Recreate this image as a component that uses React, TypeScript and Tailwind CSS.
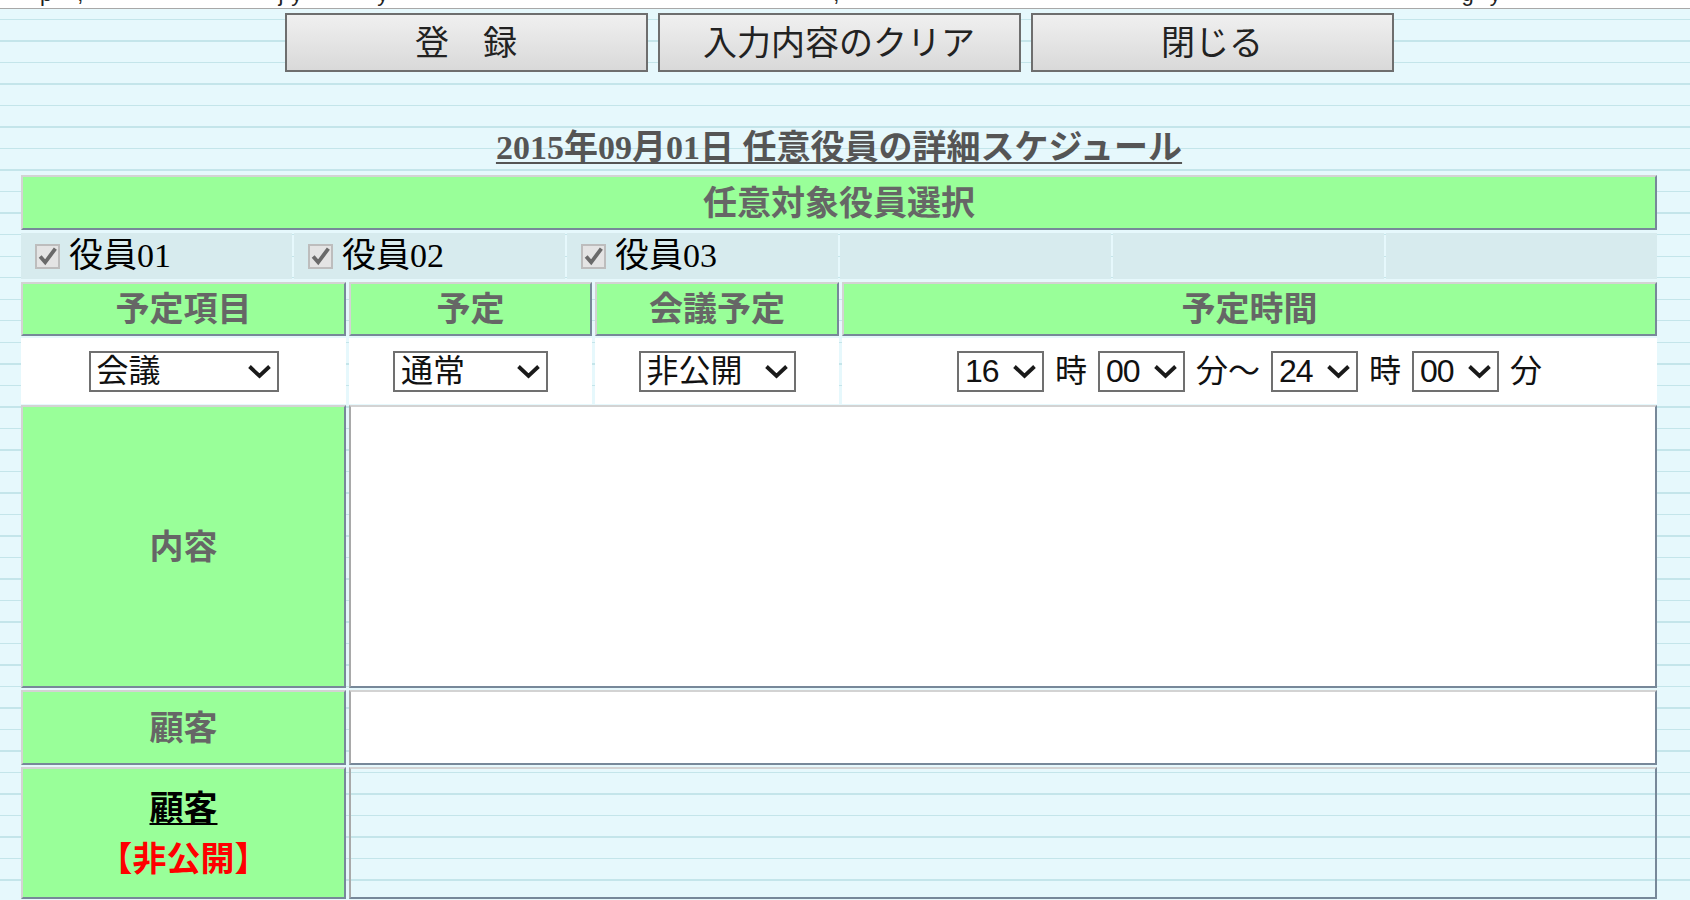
import React from 'react';

const serifJp = "font-['Liberation_Serif','Noto_Sans_CJK_JP',serif]";
const sansJp = "font-['Liberation_Sans','Noto_Sans_CJK_JP',sans-serif]";

const greenCell =
  'flex items-center justify-center bg-[#99ff99] border-2 border-t-[#d3d3d3] border-l-[#d3d3d3] border-r-[#778899] border-b-[#778899]';
const headText = 'text-[34px] font-bold leading-none text-[#666666]';
const whiteBox = 'flex-1 border-2 border-t-[#d3d3d3] border-l-[#a9a9a9] border-r-[#778899] border-b-[#778899]';

function Chevron() {
  return (
    <svg width="25" height="15" viewBox="0 0 25 15" className="shrink-0">
      <polyline points="2.5,2.5 12.5,12 22.5,2.5" fill="none" stroke="#1a1a1a" strokeWidth="3.8" strokeLinejoin="miter" />
    </svg>
  );
}

function Select({ value, className }: { value: string; className: string }) {
  return (
    <div
      className={`flex h-[41px] items-center justify-between border-2 border-[#707070] bg-white pl-[6px] pr-[5px] text-[32px] leading-none text-[#111] ${className}`}
    >
      <span>{value}</span>
      <Chevron />
    </div>
  );
}

function CheckItem({ label }: { label: string }) {
  return (
    <div className="flex items-center gap-[9px] pl-[14px]">
      <div className="flex h-[25px] w-[25px] items-center justify-center border-2 border-[#bdbdbd] bg-[#e4e4e4]">
        <svg viewBox="0 0 20 20" className="h-[21px] w-[21px]">
          <path d="M3 10 L7.8 15.5 L17.5 2.5" fill="none" stroke="#6a6a6a" strokeWidth="3.6" />
        </svg>
      </div>
      <span className={`${serifJp} text-[34px] leading-none text-black`}>{label}</span>
    </div>
  );
}

const buttons = ['登　録', '入力内容のクリア', '閉じる'];
const members = ['役員01', '役員02', '役員03', '', '', ''];

export default function App() {
  return (
    <div className="min-h-screen w-[1690px] bg-[#e6f8fc] bg-[repeating-linear-gradient(180deg,#e6f8fc_0px,#e6f8fc_19px,#c4e5ea_19px,#c4e5ea_20.5px,#e6f8fc_20.5px,#e6f8fc_21.5px)]">
      {/* bottom edge of a text line scrolled off above the form */}
      <div className={`h-[9px] overflow-hidden border-b border-[#a8a8a8] bg-white ${sansJp} text-[22px] leading-none text-[#222]`}>
        <div className="-mt-[17px] flex">
          <span className="ml-[40px]">p</span>
          <span className="ml-[25px]">,</span>
          <span className="ml-[195px]">j</span>
          <span className="ml-[8px]">y</span>
          <span className="ml-[75px]">y</span>
          <span className="ml-[445px]">,</span>
          <span className="ml-[622px]">g</span>
          <span className="ml-[16px]">y</span>
        </div>
      </div>

      <div className="ml-[21px] w-[1636px]">
        <div className="mt-[4px] flex justify-center gap-[10px]">
          {buttons.map((b) => (
            <div
              key={b}
              className={`flex h-[59px] w-[363px] items-center justify-center border-2 border-[#6e6e6e] bg-gradient-to-b from-[#f0f0f0] to-[#d9d9d9] ${sansJp} text-[34px] leading-none text-[#222]`}
            >
              {b}
            </div>
          ))}
        </div>

        <div className="mt-[56px] flex h-[40px] items-center justify-center">
          <span className={`${serifJp} text-[34px] font-bold leading-[40px] text-[#555] underline decoration-2 underline-offset-[3px]`}>
            2015年09月01日 任意役員の詳細スケジュール
          </span>
        </div>

        <div className={`mt-[7px] ${sansJp}`}>
          <div className={`h-[55px] ${greenCell}`}>
            <span className={headText}>任意対象役員選択</span>
          </div>

          <div className="mt-[3px] flex h-[46px] gap-[2px]">
            {members.map((m, i) => (
              <div key={i} className="flex flex-1 items-center bg-[#d7ebee]">
                {m && <CheckItem label={m} />}
              </div>
            ))}
          </div>

          <div className="mt-[3px] flex h-[54px] gap-[3px]">
            <div className={`w-[325px] ${greenCell}`}>
              <span className={headText}>予定項目</span>
            </div>
            <div className={`w-[243px] ${greenCell}`}>
              <span className={headText}>予定</span>
            </div>
            <div className={`w-[244px] ${greenCell}`}>
              <span className={headText}>会議予定</span>
            </div>
            <div className={`flex-1 ${greenCell}`}>
              <span className={headText}>予定時間</span>
            </div>
          </div>

          <div className="mt-[2px] flex h-[66px] gap-[3px]">
            <div className="flex w-[325px] items-center justify-center bg-white">
              <Select value="会議" className="w-[190px]" />
            </div>
            <div className="flex w-[243px] items-center justify-center bg-white">
              <Select value="通常" className="w-[155px]" />
            </div>
            <div className="flex w-[244px] items-center justify-center bg-white">
              <Select value="非公開" className="w-[157px]" />
            </div>
            <div className="flex flex-1 items-center justify-center gap-[11px] bg-white text-[32px] leading-none text-[#111]">
              <Select value="16" className="w-[87px] tracking-[-1px]" />
              <span>時</span>
              <Select value="00" className="w-[87px] tracking-[-1px]" />
              <span>分～</span>
              <Select value="24" className="w-[87px] tracking-[-1px]" />
              <span>時</span>
              <Select value="00" className="w-[87px] tracking-[-1px]" />
              <span>分</span>
            </div>
          </div>

          <div className="mt-[1px] flex h-[283px] gap-[3px]">
            <div className={`w-[325px] ${greenCell}`}>
              <span className={headText}>内容</span>
            </div>
            <div className={`${whiteBox} bg-white`} />
          </div>

          <div className="mt-[2px] flex h-[75px] gap-[3px]">
            <div className={`w-[325px] ${greenCell}`}>
              <span className={headText}>顧客</span>
            </div>
            <div className={`${whiteBox} bg-white`} />
          </div>

          <div className="mt-[2px] flex h-[132px] gap-[3px]">
            <div className={`w-[325px] flex-col gap-[11px] ${greenCell}`}>
              <span className="text-[34px] font-bold leading-[40px] text-black underline decoration-2 underline-offset-[3px]">顧客</span>
              <span className="text-[34px] font-bold leading-[40px] text-[#ff0000]">【非公開】</span>
            </div>
            <div className={whiteBox} />
          </div>
        </div>
      </div>
    </div>
  );
}
